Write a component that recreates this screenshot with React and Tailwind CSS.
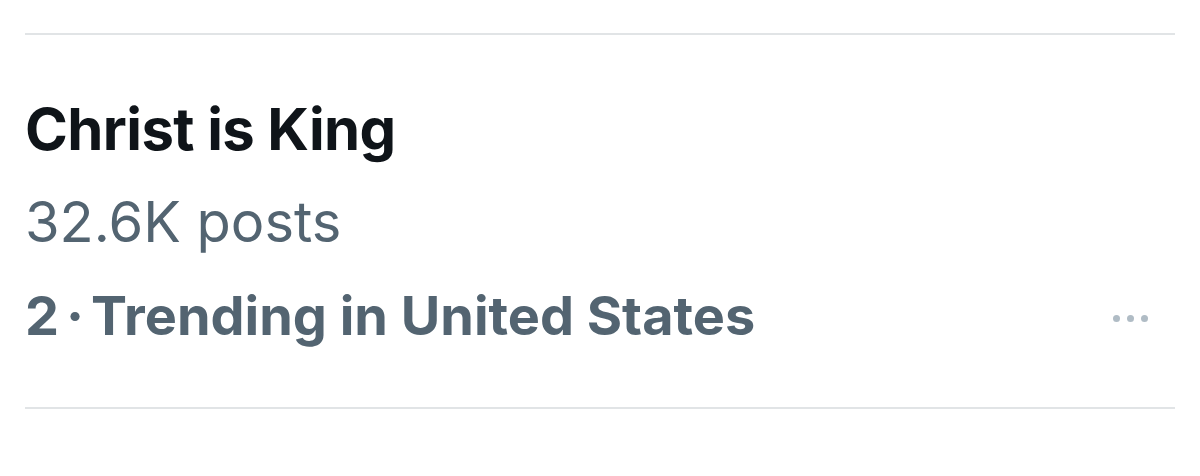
export default function App() {
    return (
        <div className="h-[476px] w-[1200px] bg-white px-[25px] pt-[33px]" style={{ fontFamily: "Inter, 'Liberation Sans', sans-serif" }}>
            <div className="border-t-2 border-[#e1e4e6]">
                <div className="flex flex-col pt-[48px] pb-[45px]">
                    <h1 className="text-[58px] font-bold leading-[92px] tracking-[-0.01em] text-[#0f1419]">
                        Christ is King
                    </h1>
                    <p className="text-[56px] leading-[95px] text-[#536471]">32.6K posts</p>
                    <div className="flex items-center justify-between">
                        <p className="text-[54px] font-bold leading-[92px] text-[#536471]">
                            2<span className="mx-[7px]">·</span>Trending in United States
                        </p>
                        <div className="mr-[27px] mt-[4px] flex gap-[7px]">
                            <span className="h-[7px] w-[7px] rounded-full bg-[#b0bcc5]" />
                            <span className="h-[7px] w-[7px] rounded-full bg-[#b0bcc5]" />
                            <span className="h-[7px] w-[7px] rounded-full bg-[#b0bcc5]" />
                        </div>
                    </div>
                </div>
                <div className="border-t-2 border-[#e1e4e6]" />
            </div>
        </div>
    );
}
